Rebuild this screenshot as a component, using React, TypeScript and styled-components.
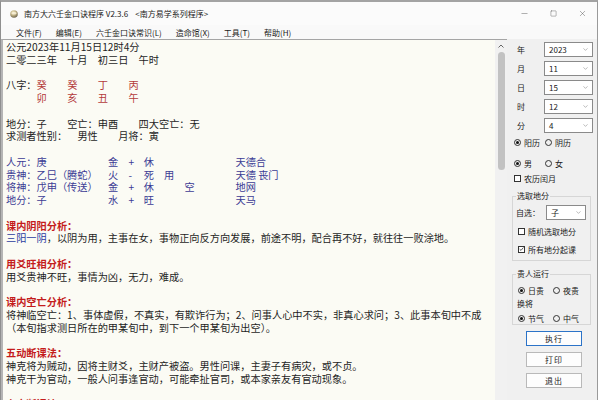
import React from "react";
import styled, { createGlobalStyle } from "styled-components";
import { ChevronDown, Minus, Square, X } from "lucide-react";

const GlobalStyle = createGlobalStyle`
  html, body {
    margin: 0;
    padding: 0;
    background: #ffffff;
  }
  body {
    font-family: "Noto Sans CJK SC", "Noto Sans", sans-serif;
  }
`;

type Tone = "ink" | "red" | "blue" | "link";

const tones: Record<Tone, string> = {
  ink: "#1e1e1e",
  red: "#b33a3a",
  blue: "#3b3b95",
  link: "#2b3c9e",
};

const Window = styled.div`
  width: 598px;
  height: 400px;
  box-sizing: border-box;
  border-top: 2px solid #a3a3a3;
  border-left: 1px solid #8f8f8f;
  border-right: 1px solid #9a9a9a;
  display: flex;
  flex-direction: column;
  overflow: hidden;
  background: #f0f0f0;
`;

const TitleBar = styled.div`
  height: 23px;
  flex: none;
  display: flex;
  align-items: center;
  background: #fbfbfb;
  padding-left: 9px;
  font-size: 8px;
  color: #1a1a1a;
`;

const AppIcon = styled.svg`
  width: 8px;
  height: 8px;
  margin-right: 6px;
`;

const TitleText = styled.span`
  white-space: pre;
`;

const Controls = styled.div`
  margin-left: auto;
  display: flex;
  height: 100%;
`;

const ControlButton = styled.div`
  width: 29px;
  height: 100%;
  display: flex;
  align-items: center;
  justify-content: center;
  color: #333;
`;

const MenuBar = styled.div`
  height: 14px;
  flex: none;
  display: flex;
  align-items: center;
  background: #f9f9f9;
  padding-left: 8px;
  font-size: 8px;
  color: #1a1a1a;
`;

const MenuItem = styled.span`
  padding: 0 7px;
  white-space: pre;
`;

const Body = styled.div`
  flex: 1;
  min-height: 0;
  display: flex;
`;

const Editor = styled.div`
  width: 506px;
  flex: none;
  display: flex;
  box-sizing: border-box;
  border-top: 1px solid #a5a5a5;
  border-left: 2px solid #b4b4b4;
  background: #fbfbf4;
`;

const Content = styled.div`
  flex: 1;
  overflow: hidden;
  padding: 1px 0 0 3px;
  font-size: 10.2px;
  color: ${tones.ink};
`;

const Line = styled.div<{ $tone?: Tone }>`
  height: 12.75px;
  line-height: 12.75px;
  white-space: pre;
  display: flex;
  color: ${(p) => tones[p.$tone ?? "ink"]};
`;

const Heading = styled(Line)`
  font-weight: 700;
  color: #c41c1c;
`;

const Cell = styled.span<{ $w?: number; $tone?: Tone }>`
  flex: none;
  width: ${(p) => (p.$w !== undefined ? `${p.$w}em` : "auto")};
  ${(p) => (p.$tone ? `color: ${tones[p.$tone]};` : "")}
`;

const Scrollbar = styled.div`
  width: 12px;
  flex: none;
  background: #f1f1f1;
  display: flex;
  flex-direction: column;
  align-items: center;
`;

const ScrollArrow = styled.div`
  height: 11px;
  display: flex;
  align-items: center;
  justify-content: center;
`;

const ScrollThumb = styled.div`
  width: 7px;
  height: 118px;
  margin-top: 1px;
  border-radius: 4px;
  background: #c2c2c2;
`;

const Side = styled.div`
  flex: 1;
  box-sizing: border-box;
  padding: 3px 5px 0 5px;
  font-size: 8px;
  color: #1a1a1a;
  display: flex;
  flex-direction: column;
`;

const DateGrid = styled.div`
  display: grid;
  grid-template-columns: 27px 49px;
  row-gap: 4px;
  margin-left: 5px;
  align-items: center;
`;

const Combo = styled.div<{ $w?: number }>`
  height: 15px;
  width: ${(p) => (p.$w ? `${p.$w}px` : "auto")};
  box-sizing: border-box;
  border: 1px solid #8a8a8a;
  background: #ffffff;
  display: flex;
  align-items: center;
  padding: 0 3px 0 4px;
  justify-content: space-between;
  color: #1a1a1a;
`;

const OptionRow = styled.div<{ $top: number }>`
  display: flex;
  align-items: center;
  height: 12px;
  margin-top: ${(p) => p.$top}px;
  padding-left: 2px;
`;

const Option = styled.label<{ $w?: number }>`
  display: flex;
  align-items: center;
  width: ${(p) => (p.$w ? `${p.$w}px` : "auto")};
  white-space: pre;
`;

const RadioDot = styled.span<{ $on?: boolean }>`
  width: 7px;
  height: 7px;
  box-sizing: border-box;
  border-radius: 50%;
  border: 1px solid #333;
  margin-right: 3px;
  display: flex;
  align-items: center;
  justify-content: center;
  &::after {
    content: "";
    width: 3px;
    height: 3px;
    border-radius: 50%;
    background: ${(p) => (p.$on ? "#111" : "transparent")};
  }
`;

const CheckBox = styled.span`
  width: 7px;
  height: 7px;
  box-sizing: border-box;
  border: 1px solid #333;
  margin-right: 3px;
  display: flex;
  align-items: center;
  justify-content: center;
  background: #fff;
`;

const Group = styled.fieldset<{ $top: number; $h: number }>`
  margin: ${(p) => p.$top}px 0 0 0;
  padding: 0 4px 0 3px;
  height: ${(p) => p.$h}px;
  box-sizing: border-box;
  border: 1px solid #d6d6d6;
  min-width: 0;
  width: 79px;
`;

const Legend = styled.legend`
  padding: 0 1px;
  margin-left: 0;
  font-size: 8px;
  line-height: 10px;
`;

const SubTitle = styled.div`
  font-size: 8px;
  line-height: 10px;
  margin-top: 3px;
  padding-left: 1px;
`;

const PickRow = styled.div`
  display: flex;
  align-items: center;
  justify-content: space-between;
  margin-top: 4px;
`;

const Buttons = styled.div`
  display: flex;
  flex-direction: column;
  align-items: center;
  gap: 6px;
  margin-top: 6px;
  padding-left: 3px;
`;

const Button = styled.div<{ $primary?: boolean }>`
  width: 56px;
  height: 15px;
  box-sizing: border-box;
  border: 1px solid ${(p) => (p.$primary ? "#2b73c8" : "#b9b9b9")};
  background: #fdfdfd;
  display: flex;
  align-items: center;
  justify-content: center;
  letter-spacing: 1px;
`;

type Seg = [number, string, Tone?];

const Cols = ({ segs, tone }: { segs: Seg[]; tone?: Tone }) => (
  <Line $tone={tone}>
    {segs.map(([at, text, t], i) => {
      const next = segs[i + 1];
      return (
        <Cell key={i} $w={next ? next[0] - at : undefined} $tone={t}>
          {text}
        </Cell>
      );
    })}
  </Line>
);

const Blank = () => <Line> </Line>;

const Chevron = () => <ChevronDown size={7} strokeWidth={1.5} color="#666" />;

const Radio = ({ on, label, w }: { on?: boolean; label: string; w?: number }) => (
  <Option $w={w}>
    <RadioDot $on={on} />
    {label}
  </Option>
);

const Check = ({ on, label }: { on?: boolean; label: string }) => (
  <Option>
    <CheckBox>
      {on && (
        <svg width="6" height="6" viewBox="0 0 6 6">
          <path d="M0.8 3.2 L2.4 4.7 L5.3 1.2" fill="none" stroke="#222" strokeWidth="0.9" />
        </svg>
      )}
    </CheckBox>
    {label}
  </Option>
);

const menus = ["文件(F)", "编辑(E)", "六壬金口诀常识(L)", "造命馆(X)", "工具(T)", "帮助(H)"];

const dates: [string, string][] = [
  ["年", "2023"],
  ["月", "11"],
  ["日", "15"],
  ["时", "12"],
  ["分", "4"],
];

export default function App() {
  return (
    <>
      <GlobalStyle />
      <Window>
        <TitleBar>
          <AppIcon viewBox="0 0 8 8">
            <defs>
              <radialGradient id="bowl" cx="40%" cy="30%" r="70%">
                <stop offset="0%" stopColor="#f3e7c0" />
                <stop offset="60%" stopColor="#b5a77c" />
                <stop offset="100%" stopColor="#6f6550" />
              </radialGradient>
            </defs>
            <circle cx="4" cy="4" r="3.8" fill="url(#bowl)" />
            <ellipse cx="4" cy="3.3" rx="2.6" ry="1.2" fill="#fbf4dc" opacity="0.8" />
          </AppIcon>
          <TitleText>南方大六壬金口诀程序 V2.3.6    &lt;南方易学系列程序&gt;</TitleText>
          <Controls>
            <ControlButton>
              <Minus size={9} strokeWidth={1} />
            </ControlButton>
            <ControlButton>
              <Square size={7} strokeWidth={1.2} />
            </ControlButton>
            <ControlButton>
              <X size={9} strokeWidth={1} />
            </ControlButton>
          </Controls>
        </TitleBar>
        <MenuBar>
          {menus.map((m) => (
            <MenuItem key={m}>{m}</MenuItem>
          ))}
        </MenuBar>
        <Body>
          <Editor>
            <Content>
              <Line>公元2023年11月15日12时4分</Line>
              <Cols segs={[[0, "二零二三年"], [6, "十月"], [9, "初三日"], [13, "午时"]]} />
              <Blank />
              <Cols segs={[[0, "八字："], [3, "癸", "red"], [6, "癸", "red"], [9, "丁", "red"], [12, "丙", "red"]]} />
              <Cols segs={[[0, ""], [3, "卯", "red"], [6, "亥", "red"], [9, "丑", "red"], [12, "午", "red"]]} />
              <Blank />
              <Cols segs={[[0, "地分：子"], [6, "空亡：申酉"], [13, "四大空亡：无"]]} />
              <Cols segs={[[0, "求测者性别："], [7, "男性"], [11, "月将：寅"]]} />
              <Blank />
              <Cols tone="blue" segs={[[0, "人元：庚"], [10, "金"], [12, "+"], [13.5, "休"], [22.5, "天德合"]]} />
              <Cols tone="blue" segs={[[0, "贵神：乙巳（腾蛇）"], [10, "火"], [12, "-"], [13.5, "死"], [15.5, "用"], [22.5, "天德 丧门"]]} />
              <Cols tone="blue" segs={[[0, "将神：戊申（传送）"], [10, "金"], [12, "+"], [13.5, "休"], [17.5, "空"], [22.5, "地网"]]} />
              <Cols tone="blue" segs={[[0, "地分：子"], [10, "水"], [12, "+"], [13.5, "旺"], [22.5, "天马"]]} />
              <Blank />
              <Heading>课内阴阳分析：</Heading>
              <Line>
                <Cell $tone="link">三阳一阴</Cell>，以阴为用，主事在女，事物正向反方向发展，前途不明，配合再不好，就往往一败涂地。
              </Line>
              <Blank />
              <Heading>用爻旺相分析：</Heading>
              <Line>用爻贵神不旺，事情为凶，无力，难成。</Line>
              <Blank />
              <Heading>课内空亡分析：</Heading>
              <Line>将神临空亡：1、事体虚假，不真实，有欺诈行为；2、问事人心中不实，非真心求问；3、此事本旬中不成</Line>
              <Line>（本旬指求测日所在的甲某旬中，到下一个甲某旬为出空）。</Line>
              <Blank />
              <Heading>五动断课法：</Heading>
              <Line>神克将为贼动，因将主财爻，主财产被盗。男性问课，主妻子有病灾，或不贞。</Line>
              <Line>神克干为官动，一般人问事逢官动，可能牵扯官司，或本家亲友有官动现象。</Line>
              <Blank />
              <Heading>六亲断课法：</Heading>
            </Content>
            <Scrollbar>
              <ScrollArrow>
                <svg width="6" height="4" viewBox="0 0 6 4">
                  <path d="M0.5 3.5 L3 1 L5.5 3.5" fill="none" stroke="#555" strokeWidth="0.9" />
                </svg>
              </ScrollArrow>
              <ScrollThumb />
            </Scrollbar>
          </Editor>
          <Side>
            <DateGrid>
              {dates.map(([k, v]) => (
                <React.Fragment key={k}>
                  <span>{k}</span>
                  <Combo>
                    {v}
                    <Chevron />
                  </Combo>
                </React.Fragment>
              ))}
            </DateGrid>
            <OptionRow $top={3}>
              <Radio on label="阳历" w={31} />
              <Radio label="阴历" />
            </OptionRow>
            <OptionRow $top={9}>
              <Radio on label="男" w={31} />
              <Radio label="女" />
            </OptionRow>
            <OptionRow $top={3}>
              <Check label="农历闰月" />
            </OptionRow>
            <Group $top={7} $h={70}>
              <Legend>选取地分</Legend>
              <PickRow>
                <span>自选：</span>
                <Combo $w={40}>
                  子
                  <Chevron />
                </Combo>
              </PickRow>
              <OptionRow $top={5}>
                <Check label="随机选取地分" />
              </OptionRow>
              <OptionRow $top={6}>
                <Check on label="所有地分起课" />
              </OptionRow>
            </Group>
            <Group $top={8} $h={56}>
              <Legend>贵人运行</Legend>
              <OptionRow $top={5}>
                <Radio on label="日贵" w={35} />
                <Radio label="夜贵" />
              </OptionRow>
              <SubTitle>换将</SubTitle>
              <OptionRow $top={3}>
                <Radio on label="节气" w={35} />
                <Radio label="中气" />
              </OptionRow>
            </Group>
            <Buttons>
              <Button $primary>执行</Button>
              <Button>打印</Button>
              <Button>退出</Button>
            </Buttons>
          </Side>
        </Body>
      </Window>
    </>
  );
}
